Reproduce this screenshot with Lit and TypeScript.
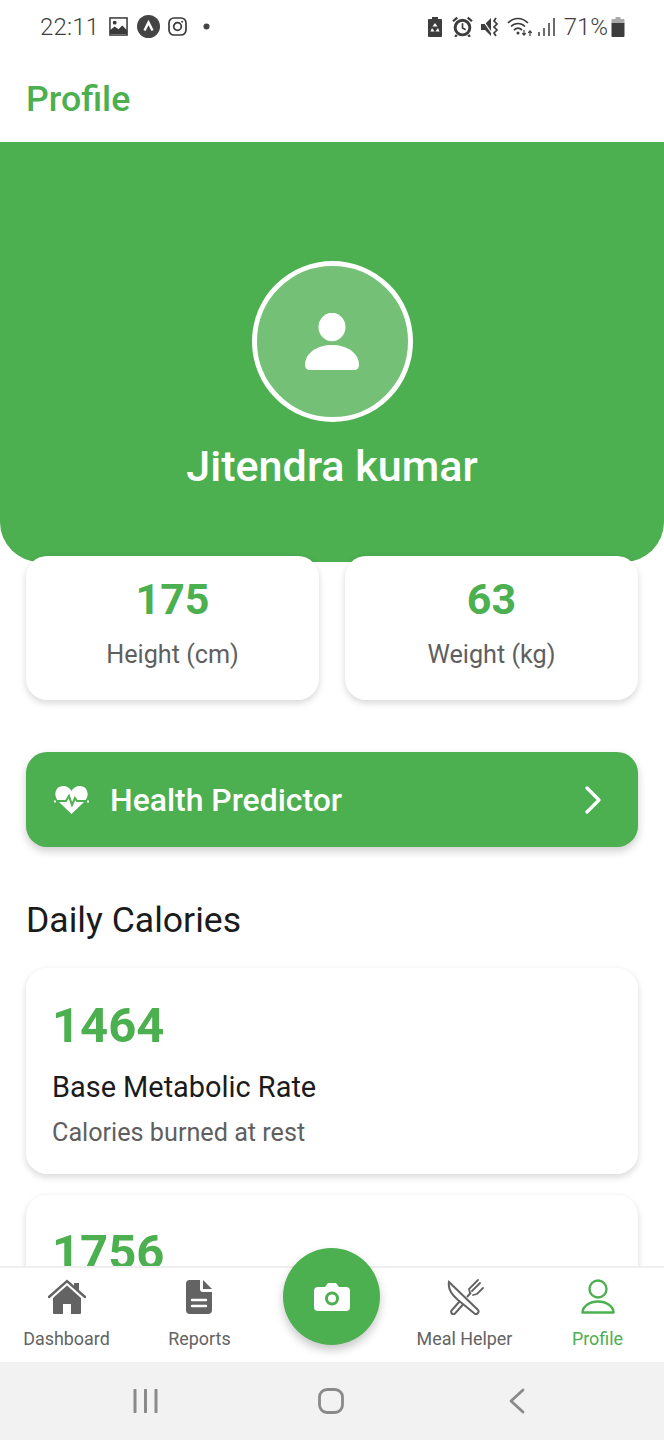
import { LitElement, html, css, svg } from "lit";
import { customElement } from "lit/decorators.js";

const GREEN = "#4caf50";

@customElement("app-root")
export class AppRoot extends LitElement {
  static styles = css`
    :host { display: block; width: 664px; height: 1440px; background: #fff; font-family: Roboto, "Liberation Sans", sans-serif; }
    .page { position: relative; width: 664px; height: 1440px; display: flex; flex-direction: column; overflow: hidden; }
    .status { height: 56px; flex: none; display: flex; align-items: center; justify-content: space-between; padding: 0 39px 3px 40px; box-sizing: border-box; color: #3f3f3f; }
    .status-side { display: flex; align-items: center; }
    .time { font-size: 24px; font-weight: 300; letter-spacing: 0.2px; margin-right: 10px; line-height: 1; }
    .pct { font-size: 24px; font-weight: 300; line-height: 1; margin: 0 3px 0 0; }
    .appbar { height: 86px; flex: none; display: flex; align-items: center; padding: 2px 26px 0; box-sizing: border-box; }
    .appbar h1 { margin: 0; font-size: 35.7px; font-weight: 500; color: #4caf50; line-height: 1; }
    .scroll { flex: 1; min-height: 0; overflow: hidden; }
    .hero { height: 420px; background: #4caf50; border-radius: 0 0 40px 40px; display: flex; flex-direction: column; align-items: center; padding-top: 119px; box-sizing: border-box; }
    .avatar { width: 161px; height: 161px; box-sizing: border-box; border: 5px solid #fff; border-radius: 50%; background: rgba(255,255,255,.22); display: flex; align-items: center; justify-content: center; }
    .name { margin-top: 20px; font-size: 43.1px; font-weight: 500; color: #fff; line-height: 49px; }
    .stats { display: flex; gap: 26px; padding: 0 26px; margin-top: -6px; position: relative; }
    .stat { flex: 1; height: 144px; background: #fff; border-radius: 21px; box-shadow: 0 3px 7px rgba(0,0,0,.16); display: flex; flex-direction: column; align-items: center; box-sizing: border-box; padding-top: 20px; }
    .stat b { font-size: 43px; font-weight: 700; color: #4caf50; line-height: 47px; }
    .stat span { font-size: 25.2px; color: #5f5f5f; line-height: 30px; margin-top: 17px; }
    .predict { margin: 52px 26px 0; height: 95px; border-radius: 21px; background: #4caf50; box-shadow: 0 4px 8px rgba(0,0,0,.2); display: flex; align-items: center; padding: 0 36px 0 28px; color: #fff; }
    .predict span { flex: 1; font-size: 31.9px; font-weight: 500; margin-left: 21px; }
    .section { margin: 53px 26px 0; font-size: 35.6px; font-weight: 450; color: #1b1b1b; line-height: 40px; }
    .card { margin: 28px 26px 0; height: 206px; border-radius: 21px; background: #fff; box-shadow: 0 3px 7px rgba(0,0,0,.16); padding: 26px 26px 0; box-sizing: border-box; }
    .card + .card { margin-top: 21px; }
    .card b { display: block; font-size: 49px; font-weight: 700; color: #4caf50; line-height: 64px; }
    .card h3 { margin: 13px 0 0; font-size: 28.9px; font-weight: 450; color: #1b1b1b; line-height: 32px; }
    .card p { margin: 14px 0 0; font-size: 25.2px; color: #5f5f5f; line-height: 32px; }
    .tabs { position: relative; height: 96px; flex: none; background: #fff; border-top: 2px solid #efefef; box-sizing: border-box; display: grid; grid-template-columns: 133px 133px 132px 133px 133px; }
    .tab { display: flex; flex-direction: column; align-items: center; padding-top: 11px; color: #636363; font-size: 17.9px; line-height: 22px; }
    .tab svg { margin-bottom: 13px; }
    .tab.on { color: #4caf50; }
    .fab { position: absolute; left: 283px; top: -20px; width: 97px; height: 97px; border-radius: 50%; background: #4caf50; box-shadow: 0 5px 10px rgba(0,0,0,.22); display: flex; align-items: center; justify-content: center; }
    .sys { height: 78px; flex: none; background: #f2f2f2; display: grid; grid-template-columns: 186px 186px 186px; padding-left: 52px; }
    .sys div { display: flex; align-items: center; justify-content: center; }
    .mr9 { margin-right: 9px; } .mr8 { margin-right: 8px; } .mr7 { margin-right: 7px; } .mr5 { margin-right: 5px; } .mr10 { margin-right: 10px; } .mr16 { margin-right: 16px; }
  `;

  private statusLeft() {
    return html`
      <svg class="mr9" width="19" height="19" viewBox="0 0 20 20"><rect x="1" y="1" width="18" height="18" fill="none" stroke="#3a3a3a" stroke-width="1.6"/><path d="M1 18V14l5-4 4 3 4-4 5 5v4z" fill="#3a3a3a"/><circle cx="6" cy="6" r="2" fill="#3a3a3a"/></svg>
      <svg class="mr8" width="23" height="23" viewBox="0 0 23 23"><circle cx="11.5" cy="11.5" r="11.5" fill="#444"/><path d="M7.5 15.5l4-8 4 8" fill="none" stroke="#fff" stroke-width="2.4"/></svg>
      <svg class="mr16" width="19" height="19" viewBox="0 0 19 19"><rect x="1" y="1" width="17" height="17" rx="5" fill="none" stroke="#3a3a3a" stroke-width="1.7"/><circle cx="9.5" cy="9.5" r="3.8" fill="none" stroke="#3a3a3a" stroke-width="1.7"/><circle cx="14.2" cy="4.8" r="1" fill="#3a3a3a"/></svg>
      <svg width="7" height="7" viewBox="0 0 7 7"><circle cx="3.5" cy="3.5" r="3" fill="#444"/></svg>`;
  }

  private statusRight() {
    return html`
      <svg class="mr10" width="14" height="20" viewBox="0 0 14 20"><path d="M4 0h6v2h3a1 1 0 0 1 1 1v16a1 1 0 0 1-1 1H1a1 1 0 0 1-1-1V3a1 1 0 0 1 1-1h3z" fill="#3d3d3d"/><path d="M7 6l2.500 3.500h-5zM4 11l2.500 3.500H2.500zM10 11l1.500 3.500H7.500z" fill="#fff"/></svg>
      <svg class="mr8" width="21" height="21" viewBox="0 0 20 20"><circle cx="10" cy="11" r="7" fill="none" stroke="#3d3d3d" stroke-width="2.800"/><path d="M10 7v4.400l3 1.600" fill="none" stroke="#3d3d3d" stroke-width="1.600"/><path d="M1 5l4-3.500M19 5l-4-3.500M4.500 18l-1.500 2M15.500 18l1.500 2" stroke="#3d3d3d" stroke-width="2.200"/></svg>
      <svg class="mr7" width="19" height="20" viewBox="0 0 19 20"><path d="M0 7h4l6-6v18l-6-6H0z" fill="#3d3d3d"/><path d="M1 2l11 16" stroke="#fff" stroke-width="1.300"/><path d="M15 1l-2 3 3 3-3 3 3 3-3 3 2 3" fill="none" stroke="#3d3d3d" stroke-width="1.700"/></svg>
      <svg class="mr5" width="26" height="20" viewBox="0 0 26 20"><path d="M1 6c6-6 14-6 20 0M4 9.500c4-4 10-4 14 0M7 13c2.500-2.300 5.500-2.300 8 0" fill="none" stroke="#3d3d3d" stroke-width="1.700"/><circle cx="11" cy="16" r="1.500" fill="#3d3d3d"/><path d="M17 13v5m-1.800-1.800l1.800 2 1.800-2M23 19v-5m-1.800 1.800l1.800-2 1.800 2" fill="none" stroke="#3d3d3d" stroke-width="1.200"/></svg>
      <svg class="mr8" width="18" height="20" viewBox="0 0 18 20"><path d="M1 15v4M6 11v8M11 6v13M16 1v18" stroke="#3d3d3d" stroke-width="1.500"/></svg>
      <span class="pct">71%</span>
      <svg width="14" height="20" viewBox="0 0 13 20"><path d="M4 0h5v2h3a1 1 0 0 1 1 1v3H0V3a1 1 0 0 1 1-1h3z" fill="#aaa"/><path d="M0 6h13v13a1 1 0 0 1-1 1H1a1 1 0 0 1-1-1z" fill="#3d3d3d"/></svg>`;
  }

  private icon(name: string) {
    const g = "#636363";
    const paths: Record<string, unknown> = {
      home: svg`<path d="M1 18L19 2l18 16" fill="none" stroke="${g}" stroke-width="2.400" stroke-linecap="round"/><path d="M26 4h5v9l-5-4.500z" fill="${g}"/><path d="M5 19L19 6.500 33 19v15a1 1 0 0 1-1 1H23V25h-8v10H6a1 1 0 0 1-1-1z" fill="${g}"/>`,
      doc: svg`<path d="M8 1h11v9a3 3 0 0 0 3 3h9v18a4 4 0 0 1-4 4H9a4 4 0 0 1-4-4V5a4 4 0 0 1 3-4z" fill="${g}"/><path d="M22 1l9 9h-9z" fill="${g}"/><path d="M11 21h14M11 27h14" stroke="#fff" stroke-width="2.400" stroke-linecap="round"/>`,
      meal: svg`<path d="M3 3l29 28a2.500 2.500 0 0 1-3.500 3.500L12 21C5 15 2 8 3 3z" fill="none" stroke="${g}" stroke-width="2"/><path d="M14 22l-8 9a2 2 0 0 0 3 3.500l8-9M21 18l4-4.500" fill="none" stroke="${g}" stroke-width="2"/><path d="M24 14l-1-4 9-9M27 16l4-1 6-6M26 12l8-8" fill="none" stroke="${g}" stroke-width="1.800" stroke-linecap="round"/>`,
      user: svg`<circle cx="19" cy="10" r="8.500" fill="none" stroke="${GREEN}" stroke-width="2.400"/><path d="M3.500 33.500c0-6 7-11 15.500-11s15.500 5 15.500 11z" fill="none" stroke="${GREEN}" stroke-width="2.400" stroke-linejoin="round"/>`,
    };
    return html`<svg width="38" height="36" viewBox="0 0 38 36">${paths[name]}</svg>`;
  }

  render() {
    return html`<div class="page">
      <div class="status">
        <div class="status-side"><span class="time">22:11</span>${this.statusLeft()}</div>
        <div class="status-side">${this.statusRight()}</div>
      </div>
      <div class="appbar"><h1>Profile</h1></div>
      <div class="scroll">
        <div class="hero">
          <div class="avatar">
            <svg width="54" height="58" viewBox="0 0 54 58"><ellipse cx="27" cy="14" rx="13.500" ry="14.300" fill="#fff"/><path d="M0 52C0 40 12 32 27 32s27 8 27 20c0 3-2 5-5 5H5c-3 0-5-2-5-5z" fill="#fff"/></svg>
          </div>
          <div class="name">Jitendra kumar</div>
        </div>
        <div class="stats">
          <div class="stat"><b>175</b><span>Height (cm)</span></div>
          <div class="stat"><b>63</b><span>Weight (kg)</span></div>
        </div>
        <div class="predict">
          <svg width="35" height="30" viewBox="0 0 35 30"><path d="M17.500 29L5 17C-2 10 2 1 9 1c4 0 7 2 8.500 5C19 3 22 1 26 1c7 0 11 9 4 16z" fill="#fff"/><path d="M0 16h12l3-5 3 9 3-7 2 3h12" fill="none" stroke="#4caf50" stroke-width="2"/><path d="M0 16.500h2M33 16.500h2" stroke="#fff" stroke-width="2"/></svg>
          <span>Health Predictor</span>
          <svg width="18" height="28" viewBox="0 0 18 28"><path d="M3 2l12 12L3 26" fill="none" stroke="#fff" stroke-width="3.200" stroke-linecap="round" stroke-linejoin="round"/></svg>
        </div>
        <div class="section">Daily Calories</div>
        <div class="card"><b>1464</b><h3>Base Metabolic Rate</h3><p>Calories burned at rest</p></div>
        <div class="card"><b>1756</b></div>
      </div>
      <div class="tabs">
        <div class="tab">${this.icon("home")}Dashboard</div>
        <div class="tab">${this.icon("doc")}Reports</div>
        <div></div>
        <div class="tab">${this.icon("meal")}Meal Helper</div>
        <div class="tab on">${this.icon("user")}Profile</div>
        <div class="fab">
          <svg width="36" height="28" viewBox="0 0 36 28"><path fill-rule="evenodd" d="M4 4h7l3-4h8l3 4h7a4 4 0 0 1 4 4v16a4 4 0 0 1-4 4H4a4 4 0 0 1-4-4V8a4 4 0 0 1 4-4zm14 4.500a7 7 0 1 0 0 14 7 7 0 0 0 0-14zm0 3a4 4 0 1 1 0 8 4 4 0 0 1 0-8z" fill="#fff"/></svg>
        </div>
      </div>
      <div class="sys">
        <div><svg width="25" height="24" viewBox="0 0 25 24"><path d="M2 1v22M12.500 1v22M23 1v22" stroke="#8a8a8a" stroke-width="3" stroke-linecap="round"/></svg></div>
        <div><svg width="26" height="26" viewBox="0 0 26 26"><rect x="1.500" y="1.500" width="23" height="23" rx="7.500" fill="none" stroke="#8a8a8a" stroke-width="2.800"/></svg></div>
        <div><svg width="16" height="26" viewBox="0 0 16 26"><path d="M14 2L2 13l12 11" fill="none" stroke="#8a8a8a" stroke-width="2.800" stroke-linecap="round" stroke-linejoin="round"/></svg></div>
      </div>
    </div>`;
  }
}
